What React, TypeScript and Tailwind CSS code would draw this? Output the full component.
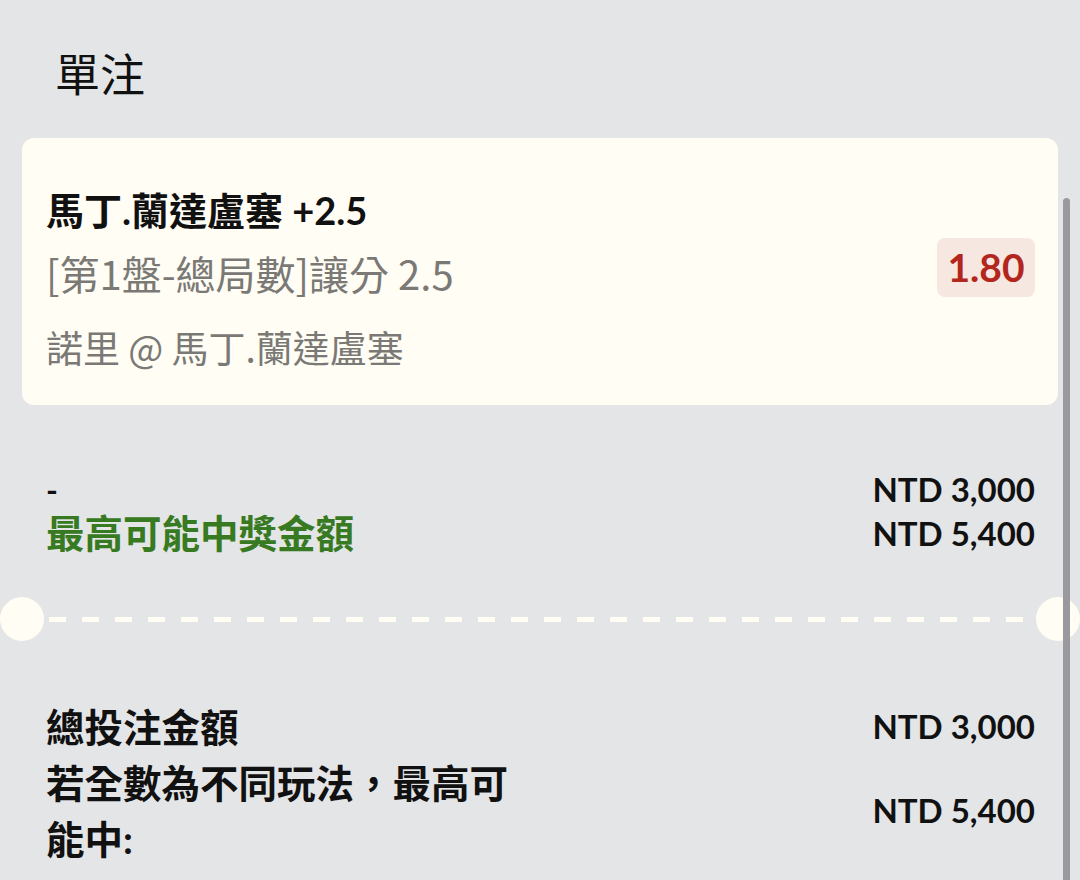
import React from 'react';

const cream = 'bg-[#fffdf4]';

interface AmountRowProps {
  label: React.ReactNode;
  amount: string;
  className?: string;
}

const AmountRow: React.FC<AmountRowProps> = ({ label, amount, className }) => (
  <div className={`flex items-center justify-between pl-[24px] pr-[23px] ${className ?? ''}`}>
    {label}
    <div className="font-['Lato','Noto_Sans_CJK_TC',sans-serif] text-[33px] font-bold text-[#111] whitespace-nowrap">
      {amount}
    </div>
  </div>
);

export default function App() {
  return (
    <div className="relative h-[880px] w-[1080px] overflow-hidden bg-[#e4e5e7] font-['Lato','Noto_Sans_CJK_TC',sans-serif] text-[#111]">
      <div className="px-[22px]">
        <h1 className="pl-[33px] pt-[45px] font-['Noto_Sans_CJK_TC',sans-serif] text-[45px] leading-[56px] font-normal">
          單注
        </h1>

        {/* selection card */}
        <div className={`mt-[37px] flex h-[267px] items-start justify-between rounded-[12px] ${cream} pl-[24px] pr-[23px]`}>
          <div className="pt-[44px]">
            <div className="text-[38px] leading-[56px] font-bold">馬丁.蘭達盧塞 +2.5</div>
            <div className="mt-[6px] font-['Noto_Sans_CJK_TC',sans-serif] text-[40px] leading-[58px] text-[#7a7976]">
              [第1盤-總局數]讓分 2.5
            </div>
            <div className="mt-[16px] font-['Noto_Sans_CJK_TC',sans-serif] text-[37px] leading-[58px] text-[#7a7976]">
              諾里 @ 馬丁.蘭達盧塞
            </div>
          </div>
          <div className="mt-[100px] flex h-[59px] w-[98px] items-center justify-center rounded-[8px] bg-[#f6e7e0] text-[39px] font-bold text-[#b3261e]">
            1.80
          </div>
        </div>

        {/* stake / potential win */}
        <div className="mt-[63px]">
          <AmountRow
            className="h-[44px]"
            label={<div className="text-[32px] font-bold">-</div>}
            amount="NTD 3,000"
          />
          <AmountRow
            className="h-[44px]"
            label={<div className="text-[38.5px] font-bold text-[#377a22]">最高可能中獎金額</div>}
            amount="NTD 5,400"
          />
        </div>

        {/* ticket divider */}
        <div className="mt-[41px] flex h-[44px] items-center">
          <div className={`-ml-[22px] h-[44px] w-[44px] shrink-0 rounded-full ${cream}`} />
          <div className="ml-[5px] mr-[2px] h-[5px] flex-1 bg-[repeating-linear-gradient(90deg,#fffdf4_0_17px,transparent_17px_33px)]" />
          <div className={`-mr-[22px] h-[44px] w-[44px] shrink-0 rounded-full ${cream}`} />
        </div>

        {/* totals */}
        <div className="mt-[58px]">
          <AmountRow
            label={<div className="text-[38.5px] leading-[56px] font-bold">總投注金額</div>}
            amount="NTD 3,000"
          />
          <AmountRow
            label={
              <div className="w-[475px] text-[38.5px] leading-[56px] font-bold">
                若全數為不同玩法，最高可能中:
              </div>
            }
            amount="NTD 5,400"
          />
        </div>
      </div>

      {/* scrollbar thumb */}
      <div className="absolute bottom-0 right-[10px] top-[198px] w-[7px] rounded-t-full bg-[#9a9a9e]" />
    </div>
  );
}
